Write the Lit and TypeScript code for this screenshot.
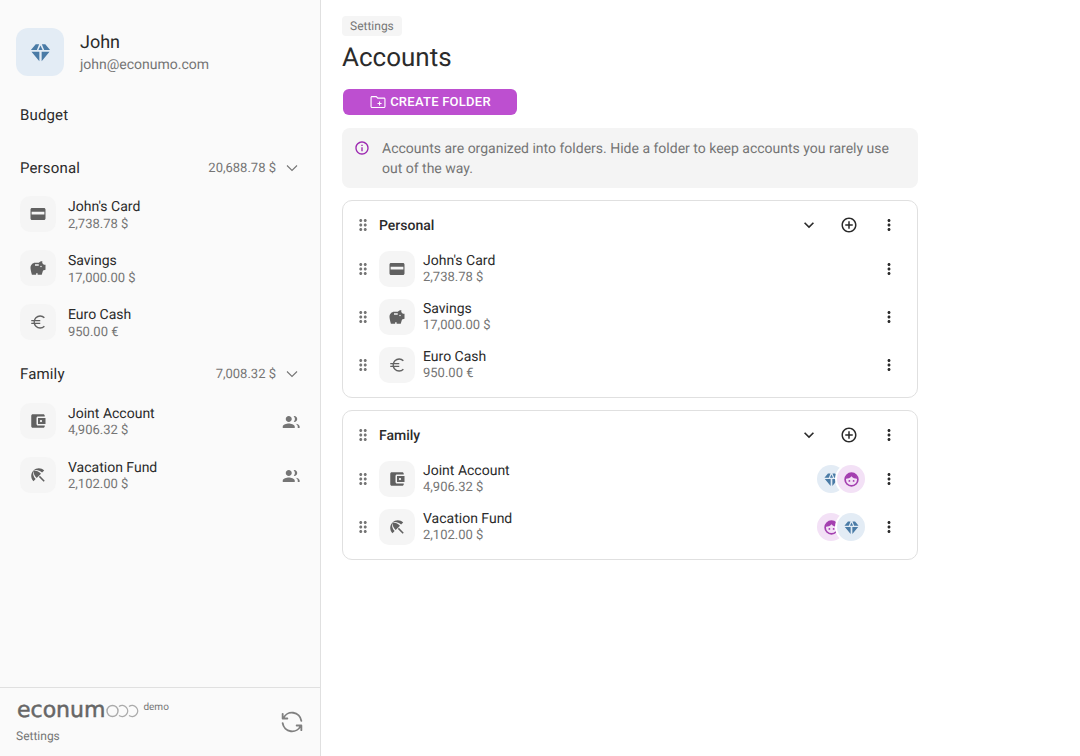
import { LitElement, html, css } from "lit";
import { customElement } from "lit/decorators.js";

const P = {
  card: "M20 4H4c-1.11 0-2 .89-2 2v12c0 1.11.89 2 2 2h16c1.11 0 2-.89 2-2V6c0-1.11-.89-2-2-2zM20.500 12.500h-17V9h17v3.500z",
  pig: "M19.83,7.5l-2.27-2.27c0.07-0.42,0.18-0.81,0.32-1.15C18.04,3.71,17.76,3,17.05,3c-1.64,0-3.09,0.79-4,2l-5,0C4.96,5,2,7.96,2,11.5C2,14.5,4,21,4,21l5.5,0v-2h2v2l5.5,0l1.68-5.59L22,14.47V7.5H19.83z M13,9H8V7h5V9z M16,11c-0.55,0-1-0.45-1-1s0.45-1,1-1s1,0.45,1,1S16.55,11,16,11z",
  euro: "euro",
  wallet: "M21 18v1c0 1.1-.9 2-2 2H5c-1.11 0-2-.9-2-2V5c0-1.1.89-2 2-2h14c1.1 0 2 .9 2 2v1h-9c-1.11 0-2 .9-2 2v8c0 1.1.89 2 2 2h9zm-9-2h10V8H12v8zm4-2.5c-.83 0-1.5-.67-1.5-1.5s.67-1.5 1.5-1.5 1.5.67 1.5 1.5-.67 1.5-1.5 1.5z",
  beach: "M13.127 14.56l1.43-1.43 6.44 6.443L19.57 21zm4.293-5.73l2.86-2.86c-3.95-3.95-10.35-3.96-14.3-.02 3.93-1.3 8.31-.25 11.44 2.88zM5.95 5.98c-3.94 3.95-3.93 10.35.02 14.3l2.86-2.86C5.7 14.29 4.65 9.91 5.95 5.98zm.02-.02l-.01.01c-.38 3.01 1.17 6.88 4.3 10.02l5.73-5.73c-3.13-3.13-7.01-4.68-10.02-4.3z",
  people: "M9 12c2.210 0 4-1.790 4-4s-1.790-4-4-4-4 1.790-4 4 1.790 4 4 4zm0 2c-2.670 0-8 1.340-8 4v2h16v-2c0-2.660-5.330-4-8-4zM15.500 4.200c1.050.900 1.700 2.300 1.700 3.800s-.650 2.900-1.700 3.800c.300.100.650.200 1 .200 2.100 0 3.800-1.800 3.800-4s-1.700-4-3.800-4c-.350 0-.700.050-1 .200zM18 14.300c1.800.900 3 2.200 3 3.700v2h2.500v-2c0-2.300-2.900-3.400-5.500-3.700z",
  vert: "M12 8c1.1 0 2-.9 2-2s-.9-2-2-2-2 .9-2 2 .9 2 2 2zm0 2c-1.1 0-2 .9-2 2s.9 2 2 2 2-.9 2-2-.9-2-2-2zm0 6c-1.1 0-2 .9-2 2s.9 2 2 2 2-.9 2-2-.9-2-2-2z",
  add: "M13 7h-2v4H7v2h4v4h2v-4h4v-2h-4V7zm-1-5C6.48 2 2 6.48 2 12s4.48 10 10 10 10-4.48 10-10S17.52 2 12 2zm0 18c-4.41 0-8-3.59-8-8s3.59-8 8-8 8 3.59 8 8-3.59 8-8 8z",
  more: "M16.59 8.59L12 13.17 7.41 8.59 6 10l6 6 6-6z",
  info: "M11 7h2v2h-2zm0 4h2v6h-2zm1-9C6.48 2 2 6.48 2 12s4.48 10 10 10 10-4.48 10-10S17.52 2 12 2zm0 18c-4.41 0-8-3.59-8-8s3.59-8 8-8 8 3.59 8 8-3.59 8-8 8z",
  folder: "M20 6h-8l-2-2H4c-1.11 0-1.99.89-1.99 2L2 18c0 1.11.89 2 2 2h16c1.11 0 2-.89 2-2V8c0-1.11-.89-2-2-2zm.5 12.500H3.500V5.500h5.900l2 2H20.500v11zM11.300 14.700h2v2h1.500v-2h2v-1.500h-2v-2h-1.500v2h-2z",
  drag: "M11 18c0 1.1-.9 2-2 2s-2-.9-2-2 .9-2 2-2 2 .9 2 2zm-2-8c-1.1 0-2 .9-2 2s.9 2 2 2 2-.9 2-2-.9-2-2-2zm0-6c-1.1 0-2 .9-2 2s.9 2 2 2 2-.9 2-2-.9-2-2-2zm6 4c1.1 0 2-.9 2-2s-.9-2-2-2-2 .9-2 2 .9 2 2 2zm0 2c-1.1 0-2 .9-2 2s.9 2 2 2 2-.9 2-2-.9-2-2-2zm0 6c-1.1 0-2 .9-2 2s.9 2 2 2 2-.9 2-2-.9-2-2-2z",
  diamond: "M7 3.500 2 9.500h6.200L10.600 3.500zM12 4.800 9.800 9.500h4.400zM13.400 3.500l2.400 6H22l-5-6zM2.600 11.300h8.200V21zM13.200 11.300h8.200L13.200 21z",
};

const icon = (d: string, size: number, cls = "") =>
  d === "euro"
    ? html`<svg class=${cls} width=${size} height=${size} viewBox="0 0 24 24" fill="none" stroke="currentColor" stroke-width="1.800" aria-hidden="true"><path d="M20.500 6.300A8 8 0 1 0 20.500 17.700M3 10.200H15M3 13.800H15"></path></svg>`
    : html`<svg class=${cls} width=${size} height=${size} viewBox="0 0 24 24" fill="currentColor" aria-hidden="true"><path d=${d}></path></svg>`;

const face = (size: number) => html`<svg width=${size} height=${size} viewBox="0 0 24 24" aria-hidden="true">
  <circle cx="12" cy="12" r="9" fill="none" stroke="currentColor" stroke-width="2.400"></circle>
  <path d="M4 11C4 6 8 3 12 3s8 3 8 8c-3 0-6-1-8-3.500C10 10 7 11 4 11z" fill="currentColor"></path>
  <circle cx="9" cy="14" r="1.300" fill="currentColor"></circle>
  <circle cx="15" cy="14" r="1.300" fill="currentColor"></circle>
</svg>`;

type Acc = { name: string; amount: string; icon: string; people?: ("d" | "f")[] };
type Folder = { name: string; total: string; accounts: Acc[] };

const FOLDERS: Folder[] = [
  {
    name: "Personal",
    total: "20,688.78 $",
    accounts: [
      { name: "John's Card", amount: "2,738.78 $", icon: P.card },
      { name: "Savings", amount: "17,000.00 $", icon: P.pig },
      { name: "Euro Cash", amount: "950.00 €", icon: P.euro },
    ],
  },
  {
    name: "Family",
    total: "7,008.32 $",
    accounts: [
      { name: "Joint Account", amount: "4,906.32 $", icon: P.wallet, people: ["d", "f"] },
      { name: "Vacation Fund", amount: "2,102.00 $", icon: P.beach, people: ["f", "d"] },
    ],
  },
];

@customElement("app-root")
export class AppRoot extends LitElement {
  static styles = css`
    :host { display: block; font-family: Roboto, "Liberation Sans", sans-serif; color: #2b2b2b; text-rendering: geometricPrecision; }
    * { box-sizing: border-box; }
    svg { display: block; flex: none; }
    .page { display: flex; height: 756px; background: #fff; overflow: hidden; }

    .side { width: 321px; flex: none; background: #fafafa; border-right: 1px solid #e0e0e0; display: flex; flex-direction: column; }
    .user { display: flex; align-items: center; gap: 16px; padding: 28px 16px 0; }
    .avatar { width: 48px; height: 48px; border-radius: 12px; background: #e3ecf5; color: #4a7ba6; display: flex; align-items: center; justify-content: center; }
    .who { padding-top: 2px; }
    .uname { font-size: 18px; line-height: 24px; color: #2b2b2b; }
    .email { font-size: 14px; line-height: 20px; color: #757575; }
    .budget { font-size: 15px; line-height: 20px; margin: 29px 20px 0; letter-spacing: .15px; }
    .sfolders { flex: 1; padding: 24px 20px 0; }
    .sfolder + .sfolder { margin-top: 6px; }
    .sfolder + .sfolder .shead { margin-bottom: 1px; }
    .shead { display: flex; align-items: center; height: 38px; font-size: 15px; letter-spacing: .15px; }
    .shead .name { flex: 1; }
    .shead .total { font-size: 13px; color: #757575; letter-spacing: 0; margin-right: 8px; }
    .shead svg { color: #757575; }
    .srow { display: flex; align-items: center; height: 54px; gap: 12px; }
    .ico { width: 36px; height: 36px; border-radius: 10px; background: #f5f5f5; color: #616161; display: flex; align-items: center; justify-content: center; flex: none; }
    .txt { flex: 1; min-width: 0; }
    .srow .txt { margin-top: 3px; }
    .acc { font-size: 14px; line-height: 16px; color: #2b2b2b; }
    .amt { font-size: 13px; line-height: 16px; color: #757575; margin-top: 1px; }
    .srow .amt { margin-top: 2px; }
    .sfolder + .sfolder .srow .txt { margin-top: 2px; }
    .sfolder + .sfolder .srow .amt { margin-top: 1px; }
    .srow .shared { color: #757575; margin-top: 2px; }

    .foot { height: 69px; border-top: 1px solid #e0e0e0; display: flex; align-items: center; justify-content: space-between; padding: 0 14px 0 16px; }
    .brand { display: flex; flex-direction: column; gap: 5px; margin-top: -2px; }
    .logo { display: flex; align-items: center; height: 24px; color: #666; margin-left: 1px; }
    .word { font-family: "DejaVu Sans", sans-serif; font-size: 22px; line-height: 24px; -webkit-text-stroke: .5px #666; margin-top: -2px; }
    .rings { color: #aaa; margin: -2px 0 0 1px; }
    .demo { font-size: 10px; color: #757575; align-self: flex-start; margin: 2px 0 0 4px; line-height: 12px; }
    .flink { font-size: 12px; line-height: 14px; color: #757575; }
    .sync { color: #808080; }

    .main { flex: 1; padding: 16px 0 0 21px; }
    .crumb { display: block; width: fit-content; font-size: 12px; line-height: 20px; height: 20px; padding: 0 8px; border-radius: 4px; background: #f5f5f5; color: #757575; }
    h1 { margin: 4px 0 0; font-weight: 400; font-size: 26px; line-height: 36px; color: #2b2b2b; }
    .btn { margin: 13px 0 0 1px; width: 174px; height: 26px; border: 0; border-radius: 6px; background: #bd4fd0; color: #fff; font: 500 13px Roboto, sans-serif; letter-spacing: .25px; display: flex; align-items: center; justify-content: center; gap: 3px; padding: 0; }
    .btn span { margin-top: -1px; }
    .note { width: 576px; margin-top: 13px; padding: 11px 20px 9px 12px; background: #f4f4f4; border-radius: 8px; display: flex; gap: 12px; color: #757575; font-size: 14px; line-height: 20px; }
    .note svg { color: #9c27b0; margin-top: 1px; }
    .card { width: 576px; margin-top: 12px; border: 1px solid #e0e0e0; border-radius: 10px; padding: 4px 8px 8px 11px; }
    .chead { display: flex; align-items: center; height: 40px; }
    .chead .name { flex: 1; font-size: 14px; font-weight: 500; color: #2b2b2b; margin: 2px 0 0 7px; }
    .drag { color: #757575; }
    .act { width: 40px; display: flex; justify-content: center; color: #2b2b2b; }
    .crow { display: flex; align-items: center; height: 48px; }
    .crow .ico { margin-left: 7px; margin-right: 8px; }
    .stack { display: flex; margin-right: 4px; }
    .ava { width: 28px; height: 28px; border-radius: 50%; display: flex; align-items: center; justify-content: center; }
    .ava + .ava { margin-left: -8px; box-shadow: 0 0 0 2px #fff; position: relative; }
    .ava.d { background: #e3ecf5; color: #4a7ba6; }
    .ava.f { background: #f3e1f6; color: #a43fb0; }
    .cact { width: 40px; display: flex; justify-content: center; color: #2b2b2b; }
  `;

  render() {
    return html`<div class="page">
      <aside class="side">
        <div class="user">
          <div class="avatar">${icon(P.diamond, 23)}</div>
          <div class="who"><div class="uname">John</div><div class="email">john@econumo.com</div></div>
        </div>
        <div class="budget">Budget</div>
        <div class="sfolders">
          ${FOLDERS.map((f) => html`<div class="sfolder">
            <div class="shead"><span class="name">${f.name}</span><span class="total">${f.total}</span>
              <svg width="16" height="16" viewBox="0 0 16 16" fill="none" stroke="currentColor" stroke-width="1.100"><path d="M3 5.500l5 5 5-5"></path></svg></div>
            ${f.accounts.map((a) => html`<div class="srow">
              <div class="ico">${icon(a.icon, 18)}</div>
              <div class="txt"><div class="acc">${a.name}</div><div class="amt">${a.amount}</div></div>
              ${a.people ? html`<span class="shared">${icon(P.people, 18)}</span>` : ""}
            </div>`)}
          </div>`)}
        </div>
        <div class="foot">
          <div class="brand">
            <div class="logo"><span class="word">econum</span>
              <svg class="rings" width="33" height="14" viewBox="0 0 33 14" fill="none" stroke="currentColor" stroke-width="1.400">
                <circle cx="6.500" cy="7" r="5.500"></circle>
                <path d="M13 2.500a5.500 5.500 0 1 1 0 9"></path>
                <path d="M23 2.500a5.500 5.500 0 1 1 0 9"></path>
              </svg>
              <span class="demo">demo</span></div>
            <div class="flink">Settings</div>
          </div>
          <svg class="sync" width="28" height="28" viewBox="0 0 24 24" fill="none" stroke="currentColor" stroke-width="1.600" stroke-linecap="round" stroke-linejoin="round"><path d="M20 11a8.100 8.100 0 0 0-15.500-2m-.5-4v4h4"></path><path d="M4 13a8.100 8.100 0 0 0 15.500 2m.5 4v-4h-4"></path></svg>
        </div>
      </aside>
      <main class="main">
        <span class="crumb">Settings</span>
        <h1>Accounts</h1>
        <button class="btn">${icon(P.folder, 18)}<span>CREATE FOLDER</span></button>
        <div class="note">${icon(P.info, 16)}<div>Accounts are organized into folders. Hide a folder to keep accounts you rarely use out of the way.</div></div>
        ${FOLDERS.map((f) => html`<section class="card">
          <div class="chead">${icon(P.drag, 18, "drag")}<span class="name">${f.name}</span>
            <span class="act">${icon(P.more, 20)}</span><span class="act">${icon(P.add, 18)}</span><span class="act">${icon(P.vert, 18)}</span></div>
          ${f.accounts.map((a) => html`<div class="crow">${icon(P.drag, 18, "drag")}
            <div class="ico">${icon(a.icon, 18)}</div>
            <div class="txt"><div class="acc">${a.name}</div><div class="amt">${a.amount}</div></div>
            ${a.people ? html`<div class="stack">${a.people.map((p) => html`<div class="ava ${p}">${p === "d" ? icon(P.diamond, 17) : face(17)}</div>`)}</div>` : ""}
            <span class="cact">${icon(P.vert, 18)}</span>
          </div>`)}
        </section>`)}
      </main>
    </div>`;
  }
}
